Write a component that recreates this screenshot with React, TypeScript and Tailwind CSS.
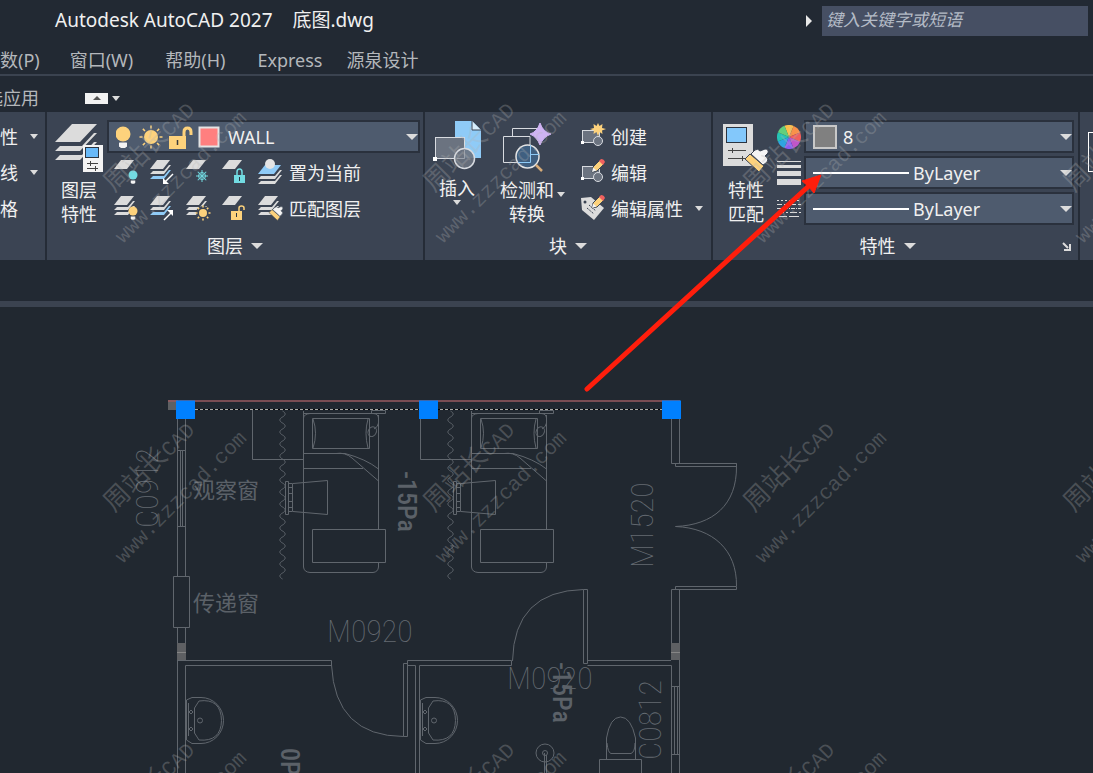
import type { ReactNode } from 'react';

const TILE = 320;
const TILE_COLS = [0, 1, 2, 3];
const TILE_ROWS = [0, 1, 2];

function Caret({ small = false }: { small?: boolean }) {
  return (
    <svg className="shrink-0" width={small ? 8 : 12} height={small ? 5 : 6} viewBox="0 0 12 6" preserveAspectRatio="none" aria-hidden="true">
      <path d="M0 0H12L6 6Z" fill="#dcdcdc" />
    </svg>
  );
}

function LayerStack({ count = 3, accent = '' }: { count?: number; accent?: string }) {
  return (
    <g fill="#dcdcdc">
      <path d="M8 0H21L14 9H1Z" fill={accent === 'top' ? '#8fcbf7' : undefined} />
      {count > 1 && <path d="M1 14L4 11H15L20 5H22L15 14Z" />}
      {count > 2 && <path d="M1 19L4 16H15L20 10H22L15 19Z" fill={accent === 'bottom' ? '#8fcbf7' : undefined} />}
    </g>
  );
}

function Bulb({ x, y, r, color }: { x: number; y: number; r: number; color: string }) {
  return (
    <g>
      <circle cx={x} cy={y} r={r} fill={color} />
      <path d={`M${x - r / 2} ${y + r + 1}h${r}v${r / 2}l-1 1h${2 - r}l-1-1z`} fill="#f4f4f4" />
    </g>
  );
}

function Sun({ x, y, r, reach }: { x: number; y: number; r: number; reach: number }) {
  return (
    <g stroke="#fdd27c" strokeWidth="1.5">
      <circle cx={x} cy={y} r={r} fill="#fdd27c" stroke="none" />
      {[0, 45, 90, 135, 180, 225, 270, 315].map((a) => (
        <path key={a} d={`M${x + r + 1.5} ${y}H${x + reach}`} transform={`rotate(${a} ${x} ${y})`} />
      ))}
    </g>
  );
}

function SmallIcon({ children }: { children: ReactNode }) {
  return (
    <svg width="26" height="26" viewBox="0 0 26 26" className="shrink-0 overflow-visible" aria-hidden="true">
      {children}
    </svg>
  );
}

function Pencil() {
  return (
    <g>
      <path d="M11 12L12 7L19 0L23 4L16 11Z" fill="#fdd27c" stroke="#3b4453" />
      <path d="M18 1L20 -1Q23 -1 24 2L22 5Z" fill="#f0615f" />
      <path d="M11 12L12 7.500L15.500 10.500Z" fill="#f4f4f4" />
    </g>
  );
}

function BlockShape() {
  return (
    <g>
      <rect x="1.500" y="6.500" width="17" height="12" fill="#6b7380" stroke="#d8dbe0" />
      <rect x="0" y="17" width="3" height="3" fill="#fff" />
      <circle cx="17" cy="17" r="4.500" fill="#6b7380" stroke="#d8dbe0" />
    </g>
  );
}

function Brush() {
  return (
    <g>
      <path d="M0 6L5 1L19 13L14 19Z" fill="#fdd27c" stroke="#3b4453" />
      <path d="M6 1L10 -3Q13 -5 15 -2L20 -4Q24 -4 23 0L20 3Q25 6 21 10L18 12Z" fill="#f4f4f4" stroke="#3b4453" />
    </g>
  );
}

const layerTools: { label: string; icon: ReactNode }[][] = [
  [
    {
      label: '关',
      icon: (
        <>
          <LayerStack count={1} />
          <Bulb x={20} y={15} r={4.5} color="#72dbe2" />
        </>
      ),
    },
    {
      label: '隔离',
      icon: (
        <>
          <LayerStack accent="bottom" />
          <path d="M24 14L15 23" stroke="#fff" strokeWidth="1.500" />
          <path d="M14 18V24H20Z" fill="#fff" />
        </>
      ),
    },
    {
      label: '冻结',
      icon: (
        <>
          <LayerStack count={1} />
          <g stroke="#72dbe2" fill="none">
            <circle cx="17" cy="16" r="3.500" />
            {[0, 45, 90, 135].map((a) => (
              <path key={a} d="M11 16H23" transform={`rotate(${a} 17 16)`} />
            ))}
          </g>
        </>
      ),
    },
    {
      label: '锁定',
      icon: (
        <>
          <LayerStack count={1} />
          <path d="M16 16V12Q16 9 18.500 9T21 12V16" stroke="#72dbe2" strokeWidth="1.500" fill="none" />
          <path d="M13 15H24V23H13Z" fill="#72dbe2" />
          <path d="M18.500 17V21" stroke="#2b3440" />
        </>
      ),
    },
  ],
  [
    {
      label: '打开所有图层',
      icon: (
        <>
          <LayerStack />
          <Bulb x={20} y={15} r={4.5} color="#fdd27c" />
        </>
      ),
    },
    {
      label: '取消隔离',
      icon: (
        <>
          <LayerStack accent="bottom" />
          <path d="M15 24L23 16" stroke="#fff" strokeWidth="1.500" />
          <path d="M18 14H24V20Z" fill="#fff" />
        </>
      ),
    },
    {
      label: '解冻所有图层',
      icon: (
        <>
          <LayerStack />
          <circle cx="18" cy="17" r="7" fill="#3b4453" />
          <Sun x={18} y={17} r={4} reach={7.5} />
        </>
      ),
    },
    {
      label: '解锁',
      icon: (
        <>
          <LayerStack count={1} />
          <path d="M18 16V12Q18 10 20.500 10T23 12V14" stroke="#fdd27c" strokeWidth="1.500" fill="none" />
          <path d="M10 15H21V24H10Z" fill="#fdd27c" />
          <path d="M15.500 17V21" stroke="#2b3440" />
        </>
      ),
    },
  ],
];

function PanelTitle({ children, launcher = false }: { children: ReactNode; launcher?: boolean }) {
  return (
    <div className="flex h-7 items-center">
      <button className="flex flex-1 items-center justify-center gap-2">
        {children}
        <Caret />
      </button>
      {launcher && (
        <button aria-label="特性设置" className="flex w-4">
          <svg width="9" height="9" viewBox="0 0 9 9" aria-hidden="true">
            <path d="M1 1L6 6M8 2V8H2" stroke="#dcdcdc" strokeWidth="2" fill="none" />
          </svg>
        </button>
      )}
    </div>
  );
}

function Combo({ label, value, children }: { label: string; value: string; children: ReactNode }) {
  return (
    <div className="flex h-[33px] items-center border-2 border-[#2a313d] bg-[#4e5b6e] pl-[7px]">
      {children}
      <select aria-label={label} className="h-7 min-w-0 flex-1 appearance-none bg-transparent outline-none">
        <option>{value}</option>
      </select>
      <Caret />
    </div>
  );
}

function LayersPanel() {
  return (
    <section className="flex w-[378px] flex-col border-r-2 border-[#252c37]">
      <div className="flex h-[120px] gap-1 pt-2 pr-[3px] pl-2">
        <button className="flex flex-col items-center pt-1 leading-6">
          <svg width="48" height="48" viewBox="0 0 48 48" className="mb-1.5" aria-hidden="true">
            <g fill="#dcdcdc">
              <path d="M17 0H42L25 18H0Z" />
              <path d="M0 27L5 22H27L39 9H42L25 27Z" />
              <path d="M0 36L5 31H27L39 18H42L25 36Z" />
            </g>
            <rect x="28" y="21" width="20" height="27" fill="#f4f4f4" />
            <rect x="30.500" y="23.500" width="13" height="10" fill="#68b9f8" stroke="#2b3440" />
            <path d="M32 39.500H43M32 44.500H43M35.500 37V42M40.500 42V47" stroke="#444" />
          </svg>
          <span>图层</span>
          <span>特性</span>
        </button>
        <div className="flex flex-1 flex-col gap-[3px]">
          <Combo label="图层" value="WALL">
            <svg width="112" height="28" viewBox="0 0 112 28" className="shrink-0" aria-hidden="true">
              <Bulb x={7} y={11} r={7.5} color="#fdd27c" />
              <path d="M3 20H11V23L9 25H5L3 23Z" fill="#f4f4f4" />
              <Sun x={35} y={14} r={7} reach={11.5} />
              <path d="M68 14V9Q68 5 71.500 5T75 9V12" stroke="#fdd27c" strokeWidth="3" fill="none" />
              <path d="M53 13H70V26H53Z" fill="#fdd27c" />
              <path d="M61.500 17V22" stroke="#3b3b3b" strokeWidth="1.500" />
              <rect x="83.500" y="4.500" width="19" height="19" fill="#ff7f7f" stroke="#e4e4e4" strokeWidth="2" />
            </svg>
          </Combo>
          {layerTools.map((row, i) => (
            <div key={i} className="flex h-[33px] items-center gap-2.5 pl-1.5">
              {row.map((tool) => (
                <button key={tool.label} aria-label={tool.label}>
                  <SmallIcon>{tool.icon}</SmallIcon>
                </button>
              ))}
              <button className="flex items-center gap-1.5">
                <SmallIcon>
                  {i === 0 ? (
                    <g>
                      <path d="M8 5H24L17 14H1Z" fill="#8fcbf7" />
                      <circle cx="13" cy="4" r="5" fill="#e4e4e4" />
                      <path d="M1 19L4 16H18L23 10H25L18 19ZM1 24L4 21H18L23 15H25L18 24Z" fill="#dcdcdc" />
                    </g>
                  ) : (
                    <g>
                      <LayerStack />
                      <g transform="translate(12 13) scale(.6)">
                        <Brush />
                      </g>
                    </g>
                  )}
                </SmallIcon>
                {i === 0 ? '置为当前' : '匹配图层'}
              </button>
            </div>
          ))}
        </div>
      </div>
      <PanelTitle>图层</PanelTitle>
    </section>
  );
}

function BlockPanel() {
  return (
    <section className="flex w-[288px] flex-col border-r-2 border-[#252c37]">
      <div className="flex h-[120px] pt-2 pl-2">
        <button className="flex w-12 flex-col items-center leading-6">
          <svg width="48" height="50" viewBox="0 0 48 50" className="mb-1.5" aria-hidden="true">
            <path d="M22 1H39L48 10V38H22Z" fill="#8fcbf7" />
            <path d="M39 1V10H48" fill="#d8eefc" stroke="#3b4453" />
            <rect x="2.500" y="17.500" width="29" height="21" fill="#6b7380" stroke="#d8dbe0" />
            <rect x="0" y="37" width="4" height="4" fill="#fff" />
            <circle cx="31.500" cy="38.500" r="10" fill="#6b7380" fillOpacity=".9" stroke="#d8dbe0" strokeWidth="1.500" />
            <path d="M24 38.500H31.500V30" stroke="#9aa1ab" fill="none" />
          </svg>
          <span>插入</span>
          <Caret small />
        </button>
        <button className="ml-4 flex w-[72px] items-start pt-1 leading-6">
          <span className="flex w-15 flex-col items-center">
            <svg width="48" height="48" viewBox="0 0 48 48" className="mb-1.5 overflow-visible" aria-hidden="true">
              <path d="M9.500 12.500V4.500H37V14M.5 12.500H27V38.500H.5Z" stroke="#d8dbe0" fill="none" />
              <path d="M37 -1Q40 8 48 10Q40 13 37 21Q34 13 27 10Q34 8 37 -1Z" fill="#cfb3f3" stroke="#cfb3f3" />
              <circle cx="24.500" cy="32.500" r="11.500" fill="#3f5f80" stroke="#e4e4e4" strokeWidth="1.500" />
              <path d="M27.500 21V38.500H15M27.500 30.500H36" stroke="#8fcbf7" fill="none" />
              <path d="M33 41L39 47" stroke="#d6ab78" strokeWidth="2.500" />
            </svg>
            <span>检测和</span>
            <span>转换</span>
          </span>
          <span className="mt-[68px]">
            <Caret small />
          </span>
        </button>
        <div className="ml-3 flex flex-col gap-[3px]">
          <button className="flex h-[33px] items-center gap-1">
            <SmallIcon>
              <BlockShape />
              <path d="M17 -1L18.500 2L21.500 0L21 4L25 5L21 6.500L21.500 10L18.500 8L17 12L15.500 8L12.500 10L13 6.500L9 5L13 4L12.500 0L15.500 2Z" fill="#fdd27c" />
            </SmallIcon>
            创建
          </button>
          <button className="flex h-[33px] items-center gap-1">
            <SmallIcon>
              <BlockShape />
              <Pencil />
            </SmallIcon>
            编辑
          </button>
          <button className="flex h-[33px] items-center gap-1">
            <SmallIcon>
              <path d="M0 2L10 1L23 12L13 24L1 14Z" fill="#dcdcdc" />
              <circle cx="4" cy="6" r="1.500" fill="#3b4453" />
              <path d="M6 12L13 18M8 9L15 15" stroke="#3b4453" strokeDasharray="2 1" />
              <Pencil />
            </SmallIcon>
            编辑属性
            <span className="ml-2">
              <Caret small />
            </span>
          </button>
        </div>
      </div>
      <PanelTitle>块</PanelTitle>
    </section>
  );
}

const wheel = ['#fdc04c', '#f9914a', '#f25f5c', '#c056c8', '#8a5cf5', '#2fa4e0', '#25c4b4', '#63cf7c'];

function PropertiesPanel() {
  return (
    <section className="flex w-[367px] flex-col border-r-2 border-[#252c37]">
      <div className="flex h-[120px] pt-2 pr-1 pl-[9px]">
        <button className="flex flex-col items-center pt-1 leading-6">
          <svg width="48" height="48" viewBox="0 0 48 48" className="mb-1.5" aria-hidden="true">
            <rect x="1" width="30" height="42" fill="#dcdcdc" />
            <rect x="4.500" y="3.500" width="20" height="15" fill="#83c8fb" stroke="#2b3440" />
            <path d="M6 26.500H24M6 34.500H24M10.500 24V29M20.500 32V37" stroke="#444" />
            <g transform="translate(23 29)">
              <Brush />
            </g>
          </svg>
          <span>特性</span>
          <span>匹配</span>
        </button>
        <div className="ml-[7px] flex w-[27px] flex-col gap-[3px]">
          <button aria-label="选择颜色" className="flex h-[33px] items-center">
            <svg width="24" height="24" viewBox="-12 -12 24 24" aria-hidden="true">
              {wheel.map((c, i) => (
                <path key={c} d="M0 0V-12A12 12 0 0 1 8.500 -8.500Z" fill={c} transform={`rotate(${i * 45 - 22})`} />
              ))}
            </svg>
          </button>
          <button aria-label="线宽设置" className="flex h-[33px] items-center">
            <svg width="24" height="24" viewBox="0 0 24 24" aria-hidden="true">
              <path d="M0 0H24V1H0ZM0 4H24V7H0ZM0 10H24V15H0ZM0 18H24V24H0Z" fill="#dcdcdc" />
            </svg>
          </button>
          <button aria-label="线型设置" className="flex h-[33px] items-center">
            <svg width="24" height="18" viewBox="0 0 24 18" aria-hidden="true">
              <g stroke="#dcdcdc">
                <path d="M0 .5H24" strokeDasharray="2 2" />
                <path d="M0 4.500H24" strokeDasharray="5 2" />
                <path d="M0 8.500H24" strokeDasharray="4 1 1 1" />
                <path d="M0 12.500H24" strokeDasharray="7 2 2 2" />
                <path d="M0 16.500H24" strokeDasharray="10 2" />
              </g>
            </svg>
          </button>
        </div>
        <div className="flex min-w-0 flex-1 flex-col gap-[3px]">
          <Combo label="对象颜色" value="8">
            <span className="mr-1.5 h-6 w-6 shrink-0 border-2 border-[#c8c8c8] bg-[#808080]" />
          </Combo>
          <Combo label="线宽" value="ByLayer">
            <span className="mr-1 h-0.5 w-24 shrink-0 bg-white" />
          </Combo>
          <Combo label="线型" value="ByLayer">
            <span className="mr-1 h-0.5 w-24 shrink-0 bg-white" />
          </Combo>
        </div>
      </div>
      <PanelTitle launcher>特性</PanelTitle>
    </section>
  );
}

function Bed() {
  return (
    <g>
      <path d="M252.500 410V459.500H303.500M303.500 411V567Q304 572 310 572.500H373Q378 572 378.500 567V562.500M378.500 529.500V418Q378 413.500 373 413.500H310Q304 414 303.500 418" />
      <path d="M303.500 413.500H385.500V410.500H371.500V413.500" />
      <path d="M312.500 418.500H369.500V448.500H312.500ZM313 419Q318 433 313 448M368 419Q364 433 368 448" />
      <path d="M378.500 415V423Q378 427 374 429" />
      <ellipse cx="372.500" cy="431.500" rx="4" ry="5" transform="rotate(25 372 431)" />
      <path d="M303.500 453.500H345Q366 459 378.500 469M336 453.500Q345 452 352 458L378.500 481M303.500 468.500H363" />
      <path d="M312.500 529.500H385.500V562.500H312.500Z" />
      <path d="M293 483.500L327.500 480.500V514.500L293 511.500M285.500 481.500H288.500V514.500H285.500ZM288.500 483.500H292.500V511.500H288.500M288.500 487.500H292.500M288.500 493.500H292.500M288.500 501.500H292.500M288.500 507.500H292.500" />
      <path d={'M282.500 411' + 'c3.500 2 3.500 4 0 6c-3.500 2-3.500 4 0 6'.repeat(14)} />
    </g>
  );
}

function Basin() {
  return (
    <g>
      <path d="M186.500 700L192 697.500H201A22.500 23 0 0 1 201 743.500H192L186.500 740ZM188.500 703V736" />
      <path d="M194.500 708L199 701Q221 698 221.500 720.500Q221 742 199 740L194.500 733Z" />
      <circle cx="200" cy="720.500" r="2.500" />
      <path d="M191 710L193 712L191 714L189 712ZM191 727L193 729L191 731L189 729Z" />
    </g>
  );
}

function FloorPlan() {
  return (
    <svg className="absolute inset-0 h-full w-full" role="img" aria-label="底图">
      <g transform="translate(0 -307)">
        <g stroke="#60666d" fill="none">
          {/* walls */}
          <path d="M177.500 419V576M185.500 419V576M177.500 450.500H185.500M177.500 526.500H185.500M180.500 450V526M182.500 450V526" />
          <path d="M173.500 576.500H189.500V627.500H173.500ZM177.500 627V773M185.500 627V660M185.500 773V665.500H331.500V660.500H178" />
          <path d="M419.500 773V665.500H511.500V660.500H407.500V665.500H415.500V773M587.500 660.500H671M587.500 665.500H671.500V773" />
          <path d="M671.500 419V463.500H736.500M679.500 419V463.500M671.500 660V589.500H679.500V773M671.500 686.500H679.500M671.500 754.500H679.500M674.500 686V754M677.500 686V754" />
          {/* doors */}
          <path d="M403.500 663.500H407.500V736.500H403.500ZM331.500 665Q335 736 403.500 736.500" />
          <path d="M583.500 589.500H587.500V663.500H583.500ZM512.500 661Q514 591 583.500 589.500" />
          <path d="M675.500 463.500H736.500V466.500H675.500ZM675.500 586.500H736.500V589.500H675.500Z" />
          <path d="M736.500 466C737 505 713 525 675.500 526.500C713 528 737 550 736.500 586" />
          <Bed />
          <g transform="translate(168 0)">
            <Bed />
          </g>
          <Basin />
          <g transform="translate(234 0)">
            <Basin />
          </g>
          <circle cx="545" cy="753" r="9" />
          <circle cx="545" cy="753" r="2.500" />
          <path d="M544.500 753V773M546.500 755V773" />
          <path d="M606.500 759V738Q610 717 620.500 717Q631 717 635.500 738V759M607 743Q608 753 611 753.500H631Q635 752 635 743M599.500 773V759.500H641.500V773" />
        </g>
        <path d="M177 643H186V660H177ZM671 643H680V660H671ZM168 400H178V410H168Z" fill="#5e6063" />
        <path d="M177 652.500H186M671 652.500H680" stroke="#858585" />
        <g fill="#656b72" className="font-['Roboto_Condensed','Roboto',sans-serif] text-[32px] font-thin">
          <text x="327" y="642">M0920</text>
          <text x="507" y="689">M0920</text>
          <text transform="translate(653 568) rotate(-90)">M1520</text>
          <text transform="translate(158 528) rotate(-90)">C0912</text>
          <text transform="translate(661 760) rotate(-90)">C0812</text>
        </g>
        <g fill="#5b6168" className="font-['Roboto_Condensed','Roboto',sans-serif] text-[26px] font-medium">
          <text transform="translate(398 471) rotate(90)">-15Pa</text>
          <text transform="translate(553 662) rotate(90)">-15Pa</text>
          <text transform="translate(281 748) rotate(90)">0P</text>
        </g>
        <g fill="#5b6168" className="font-['Noto_Sans_CJK_SC',sans-serif] text-[22px]">
          <text x="193" y="498">观察窗</text>
          <text x="193" y="611">传递窗</text>
        </g>
        {/* selected wall with its three grips */}
        <path d="M168 401H680" stroke="#995a5f" strokeWidth="1.500" />
        <path d="M195 409.500H662" stroke="#000" />
        <path d="M195 409.500H662" stroke="#a9aaa6" strokeDasharray="3 2" />
        <path d="M176 400.500H195V419H176ZM419 400.500H438V419H419ZM662 400.500H681V419H662Z" fill="#0080ff" />
      </g>
    </svg>
  );
}

function Overlay() {
  return (
    <svg className="pointer-events-none absolute inset-0 h-full w-full" aria-hidden="true">
      <g fill="#b4b4b4" fillOpacity=".28">
        {TILE_ROWS.map((row) =>
          TILE_COLS.map((col) => (
            <g key={`${row}-${col}`} transform={`translate(${col * TILE} ${row * TILE})`}>
              <text transform="translate(114 193) rotate(-45)" className="font-['Noto_Sans_CJK_SC',sans-serif] text-[26px]">
                周站长
                <tspan className="font-['Liberation_Mono',monospace] text-[21px]">CAD</tspan>
              </text>
              <text transform="translate(123 244) rotate(-45)" className="font-['Liberation_Mono',monospace] text-[21px]">
                www.zzzcad.com
              </text>
            </g>
          )),
        )}
      </g>
      <path d="M587 389L811 184" stroke="#ff1e0c" strokeWidth="5" strokeLinecap="round" />
      <path d="M821 175L802 181L808 186L814 193Z" fill="#ff1e0c" stroke="#ff1e0c" />
    </svg>
  );
}

export default function App() {
  return (
    <div className="relative flex min-h-screen flex-col overflow-hidden bg-[#222933] font-['Noto_Sans','Noto_Sans_CJK_SC',sans-serif] text-lg text-[#f0f0f0]">
      <header className="flex h-[42px] items-center pr-[5px] pl-[55px] text-[19px]">
        <h1>Autodesk AutoCAD 2027</h1>
        <span className="ml-5">底图.dwg</span>
        <button aria-label="展开搜索" className="mr-2.5 ml-auto">
          <svg width="6" height="12" viewBox="0 0 6 12" aria-hidden="true">
            <path d="M0 0L6 6L0 12Z" fill="#e8e8e8" />
          </svg>
        </button>
        <input
          type="search"
          aria-label="搜索"
          placeholder="键入关键字或短语"
          className="h-[30px] w-[266px] bg-[#464f63] px-1 pb-1 text-[17px] italic outline-none placeholder:text-[#b4bbc6]"
        />
      </header>

      <nav className="flex h-[34px] items-center border-b-2 border-[#3b4350] pt-1 whitespace-nowrap text-[#b4b7bb]">
        <a href="#params">数(P)</a>
        <a href="#window" className="ml-[30px]">窗口(W)</a>
        <a href="#help" className="ml-8">帮助(H)</a>
        <a href="#express" className="ml-8">Express</a>
        <a href="#yuanquan" className="ml-6">源泉设计</a>
      </nav>

      <div className="flex h-9 items-center pt-2 text-[#b4b7bb]">
        <button className="-ml-[33px]">精选应用</button>
        <button aria-label="最小化功能区" className="ml-[46px] flex h-[11px] w-[23px] items-center justify-center bg-[#f2f2f2]">
          <svg width="8" height="4" viewBox="0 0 8 4" aria-hidden="true">
            <path d="M0 4L4 0L8 4Z" fill="#555" />
          </svg>
        </button>
        <button aria-label="功能区选项" className="ml-1">
          <Caret small />
        </button>
      </div>

      <main className="flex flex-1 flex-col">
        <div className="flex h-[148px] bg-[#3b4453] whitespace-nowrap">
          <section className="flex w-[47px] shrink-0 flex-col gap-[3px] border-r-2 border-[#252c37] pt-2 pr-[7px]">
            <button className="flex h-[33px] items-center justify-between">性<Caret small /></button>
            <button className="flex h-[33px] items-center justify-between">线<Caret small /></button>
            <button className="flex h-[33px] items-center">格</button>
          </section>
          <LayersPanel />
          <BlockPanel />
          <PropertiesPanel />
          <section className="flex-1 overflow-hidden pt-5 pl-2">
            <div className="h-10 w-10 border border-white" />
          </section>
        </div>
        <div className="h-[41px]" />
        <div className="h-1.5 bg-[#3b4350]" />
        <div className="relative flex-1 bg-[#212830]">
          <FloorPlan />
        </div>
      </main>

      <Overlay />
    </div>
  );
}
